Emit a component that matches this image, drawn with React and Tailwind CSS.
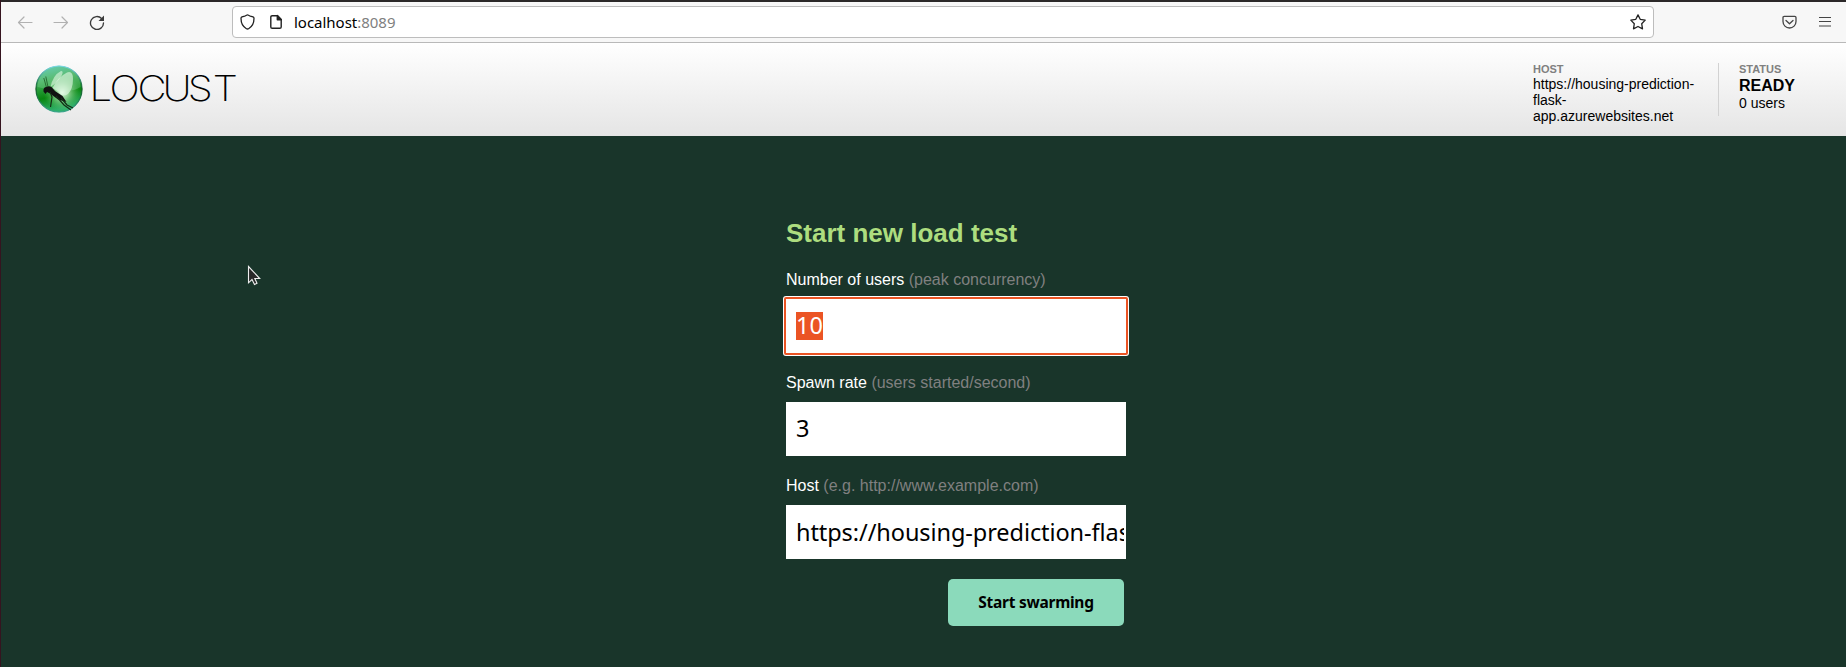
import React from "react";

function Toolbar() {
  return (
    <div className="flex h-[43px] items-start border-b border-t-2 border-b-[#b9b9b9] border-t-[#2b2829] bg-[#f7f7f7] font-['Noto_Sans',sans-serif]">
      <div className="flex w-[231px] shrink-0 items-center gap-5 pl-4 pt-[12px]">
        <svg className="size-4" viewBox="0 0 16 16" fill="none" stroke="#b1b1b1" strokeWidth="1.2" strokeLinecap="round" strokeLinejoin="round">
          <path d="M15 8.5H1.5M7 3L1.5 8.5L7 14" />
        </svg>
        <svg className="size-4" viewBox="0 0 16 16" fill="none" stroke="#b1b1b1" strokeWidth="1.2" strokeLinecap="round" strokeLinejoin="round">
          <path d="M1 8.5H14.500M9 3L14.500 8.500L9 14" />
        </svg>
        <svg className="size-4" viewBox="0 0 16 16" fill="none" stroke="#3b3b3b" strokeWidth="1.35" strokeLinecap="round">
          <path d="M14.500 9A6.500 6.500 0 1 1 12.600 4.400" />
          <path d="M15 1.500V7H9.500Z" fill="#3b3b3b" stroke="none" />
        </svg>
      </div>
      <div className="mt-1 flex h-8 w-[1422px] shrink-0 items-center rounded-[4px] border border-[#bdbdbd] bg-white pl-[7px] pr-[7px]">
        <svg className="h-4 w-[15px]" viewBox="0 0 15 16" fill="none" stroke="#222" strokeWidth="1.3" strokeLinejoin="round">
          <path d="M7.500 .8C8.200 .8 8.500 1.400 10.300 2.100L13 2.900C13.700 3.200 14 3.500 14 4.300C14 8.500 12.600 12.500 8.600 14.700Q7.500 15.300 6.400 14.700C2.400 12.500 1 8.500 1 4.300C1 3.500 1.300 3.200 2 2.900L4.700 2.100C6.500 1.400 6.800 .8 7.500 .8Z" />
        </svg>
        <svg className="ml-[15px] h-4 w-3" viewBox="0 0 12 16" fill="none" stroke="#222" strokeWidth="1.4" strokeLinejoin="round">
          <path d="M7.500 1.700H2.200Q.8 1.700 .8 3.100V12.900Q.8 14.300 2.200 14.300H9.800Q11.200 14.300 11.200 12.900V5.500Z" />
          <path d="M7.300 1.500V5.700H11.300Z" fill="#222" />
        </svg>
        <span className="ml-[12px] whitespace-nowrap text-[15px] leading-5 tracking-[-0.02px] text-black">
          localhost<span className="text-[#808080]">:8089</span>
        </span>
        <svg className="ml-auto size-4" viewBox="0 0 16 16" fill="none" stroke="#222" strokeWidth="1.3" strokeLinejoin="round">
          <path d="M8 .9L10.200 5.300L15.200 6.100L11.700 9.700L12.500 14.800L8 12.500L3.500 14.800L4.300 9.700L.8 6.100L5.800 5.300Z" />
        </svg>
      </div>
      <div className="ml-auto flex items-center gap-[22px] pr-[15px] pt-[12px]">
        <svg className="h-4 w-[15px]" viewBox="0 0 15 16" fill="none" stroke="#454545" strokeWidth="1.3" strokeLinecap="round" strokeLinejoin="round">
          <path d="M2.200 2.400H12.800Q14 2.400 14 3.600V7.500A6.500 6.500 0 0 1 1 7.500V3.600Q1 2.400 2.200 2.400ZM4 6.500L7.500 9.800L11 6.500" />
        </svg>
        <svg className="h-4 w-3" viewBox="0 0 12 16" stroke="#454545" strokeWidth="1.2">
          <path d="M0 3.500H12M0 7.500H12M0 12H12" />
        </svg>
      </div>
    </div>
  );
}

function Logo() {
  return (
    <svg className="h-[50px] w-[203px]" viewBox="34 64 203 50">
      <defs>
        <linearGradient id="ball" x1="0" y1="0" x2=".25" y2="1">
          <stop offset="0" stopColor="#54c9bd" />
          <stop offset=".35" stopColor="#40ae59" />
          <stop offset=".7" stopColor="#098611" />
          <stop offset="1" stopColor="#2fb06c" />
        </linearGradient>
        <radialGradient id="glow" cx=".57" cy=".58" r=".42">
          <stop offset="0" stopColor="#e0fbe0" />
          <stop offset=".35" stopColor="#a9dfaa" stopOpacity=".8" />
          <stop offset="1" stopColor="#4cb857" stopOpacity="0" />
        </radialGradient>
        <linearGradient id="rim" x1="0" y1="0" x2="0" y2="1">
          <stop offset="0" stopColor="#7cd9e8" />
          <stop offset=".5" stopColor="#125c25" />
          <stop offset="1" stopColor="#3ba68c" />
        </linearGradient>
      </defs>
      <circle cx="59" cy="89" r="23.200" fill="url(#ball)" />
      <circle cx="59" cy="89" r="22" fill="url(#glow)" />
      <path d="M37.500 87A21.500 21.500 0 0 1 80.500 87Q73 92 62 90Q48 90 37.500 87Z" fill="#b5edcc" opacity=".22" />
      <circle cx="59" cy="89" r="23" fill="none" stroke="url(#rim)" strokeWidth="1.200" />
      <path d="M50.500 87Q53 75 61 71Q64 71 61.500 76Q58 82 50.500 87Z" fill="#e2f8e5" opacity=".6" />
      <path d="M52.500 88Q58 77 67 72.500Q73 70.500 73 79Q73 89 68 94Q62 98 59 92Z" fill="#e7fae9" opacity=".6" />
      <path d="M46.500 87.500L43.800 78M48 87L45.800 76.500" stroke="#174b1d" strokeWidth=".7" fill="none" />
      <path d="M43.500 91.500Q43 87 46.500 87Q49 85.500 51.500 87L55 91L62.500 96L66.500 102L58 99.500L50 93.500L47 92L45.500 94Z" fill="#111" />
      <path d="M50 92L52 97L50.500 107M56 96L64 105L71 110M61 98L67 105L73 108" stroke="#132d15" strokeWidth="1.200" fill="none" />
      <text transform="scale(1.13 1)" x="79.200 96.900 121.700 143.800 166.200 188.300" y="101.500" className="fill-black font-['Inter',sans-serif] text-[35.500px] font-extralight">LOCUST</text>
    </svg>
  );
}

function Header() {
  return (
    <header className="flex h-[93px] items-start bg-linear-to-b from-white to-[#e5e5e5]">
      <div className="pl-[33px] pt-[21px]"><Logo /></div>
      <div className="ml-auto mt-5 h-[53px] w-[186px] border-r border-[#d2d2d2] text-[14px] leading-4 text-black">
        <div className="h-[13px] text-[11px] font-bold leading-[13px] text-[#808080]">HOST</div>
        <div className="w-[170px]">https://housing-prediction-<br />flask-<br />app.azurewebsites.net</div>
      </div>
      <div className="mt-5 w-[127px] pl-5 text-black">
        <div className="h-[13px] text-[11px] font-bold leading-[13px] text-[#808080]">STATUS</div>
        <div className="h-[19px] text-[16px] font-bold leading-[19px]">READY</div>
        <div className="text-[14px] leading-4">0 users</div>
      </div>
    </header>
  );
}

function Field({ label, hint, children }) {
  return (
    <div className="h-[103px]">
      <div className="h-[28px] text-[16px] leading-[18px] text-white">
        {label} <span className="text-[#808080]">{hint}</span>
      </div>
      {children}
    </div>
  );
}

export default function App() {
  return (
    <div className="flex h-[667px] flex-col overflow-hidden border-l border-[#35141f] bg-[#19352a] font-['Liberation_Sans',Arial,sans-serif]">
      <Toolbar />
      <Header />
      <main className="flex grow items-start">
        <div className="w-[785px] shrink-0 pl-[246px] pt-[129px]">
          <svg className="h-[22px] w-[15px]" viewBox="0 0 15 22">
            <path d="M1.500 1.500V17.800L5 14.500L7.500 19.500L10 18.300L7.800 13.500H12.700Z" fill="#292929" stroke="#eee" strokeWidth="1.100" />
          </svg>
        </div>
        <form className="w-[340px] pt-[82px]" onSubmit={(e) => e.preventDefault()}>
          <h2 className="h-[53px] whitespace-nowrap text-[26px] font-bold leading-[31px] text-[#addd7f]">Start new load test</h2>
          <Field label="Number of users" hint="(peak concurrency)">
            <div className="-mx-[2px] -mt-[2px] flex h-[58px] items-center rounded-[2px] border-2 border-[#eb5424] bg-white pl-[10px] font-['Noto_Sans',sans-serif] text-[23.500px] text-white ring-1 ring-white">
              <span className="flex h-7 items-center bg-[#eb5424]">10</span>
            </div>
          </Field>
          <Field label="Spawn rate" hint="(users started/second)">
            <div className="flex h-[54px] items-center bg-white pl-[10px] font-['Noto_Sans',sans-serif] text-[23.500px] text-black">3</div>
          </Field>
          <Field label="Host" hint="(e.g. http://www.example.com)">
            <div className="flex h-[54px] items-center bg-white pl-[10px] pr-[2px] pt-px font-['Noto_Sans',sans-serif] text-[23.500px] tracking-[-0.080px] text-black">
              <span className="w-full overflow-hidden whitespace-nowrap">https://housing-prediction-flask-app.azurewebsites.net</span>
            </div>
          </Field>
          <button className="-mt-px ml-[162px] block h-[47px] w-44 rounded-[5px] bg-[#8bdabb] font-['Noto_Sans',sans-serif] text-[15.500px] font-bold tracking-[-0.270px] text-black">Start swarming</button>
        </form>
      </main>
    </div>
  );
}
